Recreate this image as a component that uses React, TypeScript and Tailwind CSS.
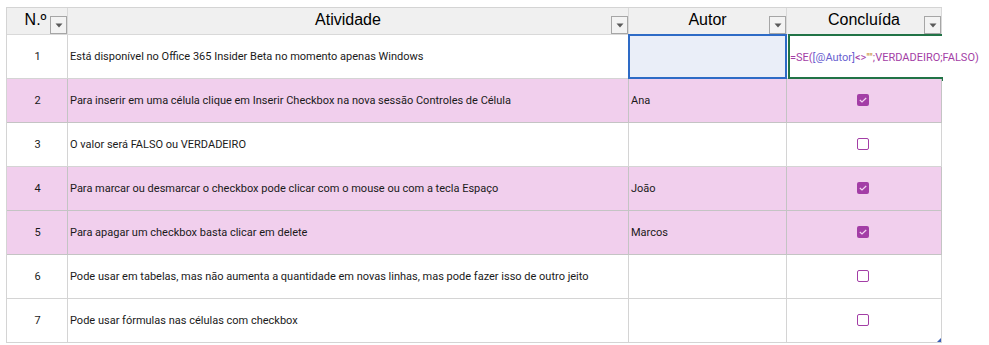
import React from "react";

const rows = [
  { n: 1, a: "Está disponível no Office 365 Insider Beta no momento apenas Windows", autor: "", c: null as null | boolean },
  { n: 2, a: "Para inserir em uma célula clique em Inserir Checkbox na nova sessão Controles de Célula", autor: "Ana", c: true },
  { n: 3, a: "O valor será FALSO ou VERDADEIRO", autor: "", c: false },
  { n: 4, a: "Para marcar ou desmarcar o checkbox pode clicar com o mouse ou com a tecla Espaço", autor: "João", c: true },
  { n: 5, a: "Para apagar um checkbox basta clicar em delete", autor: "Marcos", c: true },
  { n: 6, a: "Pode usar em tabelas, mas não aumenta a quantidade em novas linhas, mas pode fazer isso de outro jeito", autor: "", c: false },
  { n: 7, a: "Pode usar fórmulas nas células com checkbox", autor: "", c: false },
];

function Drop() {
  return (
    <div className="absolute right-0 bottom-0 w-[17px] h-[18px] border border-[#a6a6a6] bg-[#f3f3f3] flex items-center justify-center">
      <svg width="8" height="5" viewBox="0 0 8 5">
        <path d="M0.5 0.5 L7.5 0.5 L4 4.5 Z" fill="#5a5a5a" />
      </svg>
    </div>
  );
}

function Check({ on }: { on: boolean }) {
  if (on)
    return (
      <div className="w-[12px] h-[12px] rounded-[2px] bg-[#a33ea6] flex items-center justify-center">
        <svg width="8" height="6" viewBox="0 0 8 6">
          <path d="M0.8 3 L3 5 L7.2 1" stroke="#f3d6f1" strokeWidth="1.2" fill="none" />
        </svg>
      </div>
    );
  return <div className="w-[12px] h-[12px] rounded-[2px] border border-[#a33ea6] bg-white" />;
}

export default function App() {
  const font = { fontFamily: '"Liberation Sans", Arial, sans-serif' };
  const body = { fontFamily: "Roboto, Arial, sans-serif" };
  return (
    <div className="w-[989px] h-[345px] bg-white pt-[7px] pl-[6px]" style={font}>
      <div className="grid grid-cols-[61px_561px_158px_155px] w-fit border-l border-t border-[#d4d4d4]">
        {/* header */}
        {["N.º", "Atividade", "Autor", "Concluída"].map((h, i) => (
          <div
            key={h}
            className="relative h-[27px] bg-[#f0f0f0] border-r border-b border-[#d9d9d9] flex justify-center pt-[3px] text-[16px] leading-[18px] text-black"
          >
            <span className={i === 0 ? "pl-[1px] -ml-[4px]" : ""}>{h}</span>
            <Drop />
          </div>
        ))}
        {rows.map((r, idx) => {
          const pink = r.n === 2 || r.n === 4 || r.n === 5;
          const bg = pink ? "bg-[#f1cfed]" : "bg-white";
          const bc = pink ? "border-[#c4c4c4]" : "border-[#d4d4d4]";
          return (
            <React.Fragment key={r.n}>
              <div style={body} className={`${bg} ${bc} h-[44px] border-r border-b flex items-center justify-center text-[11px] text-[#1a1a1a] pl-[1px] pt-[1px]`}>
                {r.n}
              </div>
              <div style={body} className={`${bg} ${bc} h-[44px] border-r border-b flex items-center pl-[2px] pt-[1px] text-[11px] text-[#1a1a1a] whitespace-nowrap`}>
                {r.a}
              </div>
              <div style={body} className={`relative ${idx === 0 ? "bg-[#eaeef8]" : bg} ${bc} h-[44px] border-r border-b flex items-center pl-[2px] pt-[1px] text-[11px] text-[#1a1a1a]`}>
                {r.autor}
                {idx === 0 && (
                  <div className="absolute -left-[1px] -top-[1px] -right-[1px] -bottom-[1px] border-2 border-[#2e6bc6]" />
                )}
              </div>
              <div style={body} className={`relative ${bg} ${idx === 0 ? "border-r-transparent border-b-[#d4d4d4]" : bc} h-[44px] border-r border-b flex items-center justify-center text-[11px] overflow-visible`}>
                {r.c === null ? (
                  <>
                    <div className="absolute left-[1px] top-[-1px] bottom-[-1px] right-[-1px] border-t-2 border-b-2 border-l-2 border-[#217346]" />
                    <div className="absolute right-[-2px] bottom-[-3px] w-[4px] h-[4px] bg-[#217346]" />
                    <span className="absolute left-[3px] top-1/2 -translate-y-1/2 mt-[1px] whitespace-nowrap text-[#a33ea6] text-[11px]">
                      =SE(<span className="text-[#6a5fd0]">[@Autor]</span>&lt;&gt;<span className="text-[#c28b2c]">""</span>;VERDADEIRO;FALSO)
                    </span>
                  </>
                ) : (
                  <div className="pr-[2px] -mt-[1px]">
                    <Check on={r.c} />
                  </div>
                )}
                {idx === rows.length - 1 && (
                  <div className="absolute right-0 bottom-0 w-[4px] h-[4px] bg-[#3a5fb8]" style={{ clipPath: "polygon(100% 0, 100% 100%, 0 100%)" }} />
                )}
              </div>
            </React.Fragment>
          );
        })}
      </div>
    </div>
  );
}
